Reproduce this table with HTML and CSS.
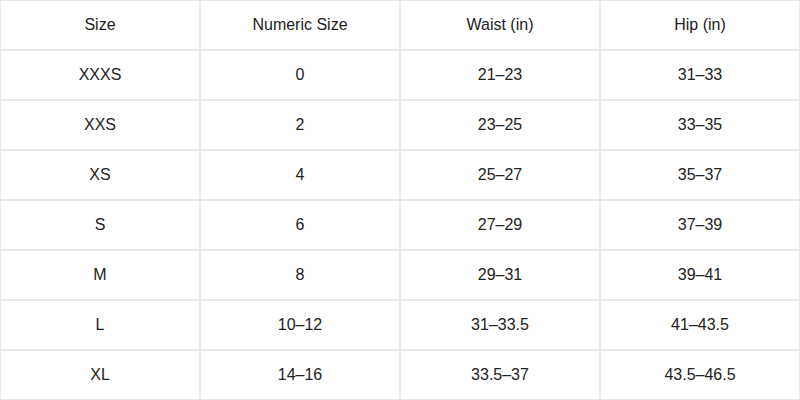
FILE: index.html
```html
<!DOCTYPE html>
<html lang="en">
<head>
<meta charset="utf-8">
<title>Size Chart</title>
<link rel="stylesheet" href="styles.css">
</head>
<body>
<table class="chart">
  <thead>
    <tr><th>Size</th><th>Numeric Size</th><th>Waist (in)</th><th>Hip (in)</th></tr>
  </thead>
  <tbody>
    <tr><td>XXXS</td><td>0</td><td>21–23</td><td>31–33</td></tr>
    <tr><td>XXS</td><td>2</td><td>23–25</td><td>33–35</td></tr>
    <tr><td>XS</td><td>4</td><td>25–27</td><td>35–37</td></tr>
    <tr><td>S</td><td>6</td><td>27–29</td><td>37–39</td></tr>
    <tr><td>M</td><td>8</td><td>29–31</td><td>39–41</td></tr>
    <tr><td>L</td><td>10–12</td><td>31–33.5</td><td>41–43.5</td></tr>
    <tr><td>XL</td><td>14–16</td><td>33.5–37</td><td>43.5–46.5</td></tr>
  </tbody>
</table>
</body>
</html>
```
FILE: styles.css
```css
html, body {
  margin: 0;
  padding: 0;
  background: #fff;
}
.chart {
  width: 800px;
  border-collapse: separate;
  border-spacing: 0;
  table-layout: fixed;
  font-family: "Liberation Sans", Arial, sans-serif;
  font-size: 16px;
  color: #222;
}
.chart th,
.chart td {
  box-sizing: border-box;
  height: 50px;
  border: 1px solid #e8e8e8;
  text-align: center;
  vertical-align: middle;
  font-weight: normal;
  padding: 0;
}
```
